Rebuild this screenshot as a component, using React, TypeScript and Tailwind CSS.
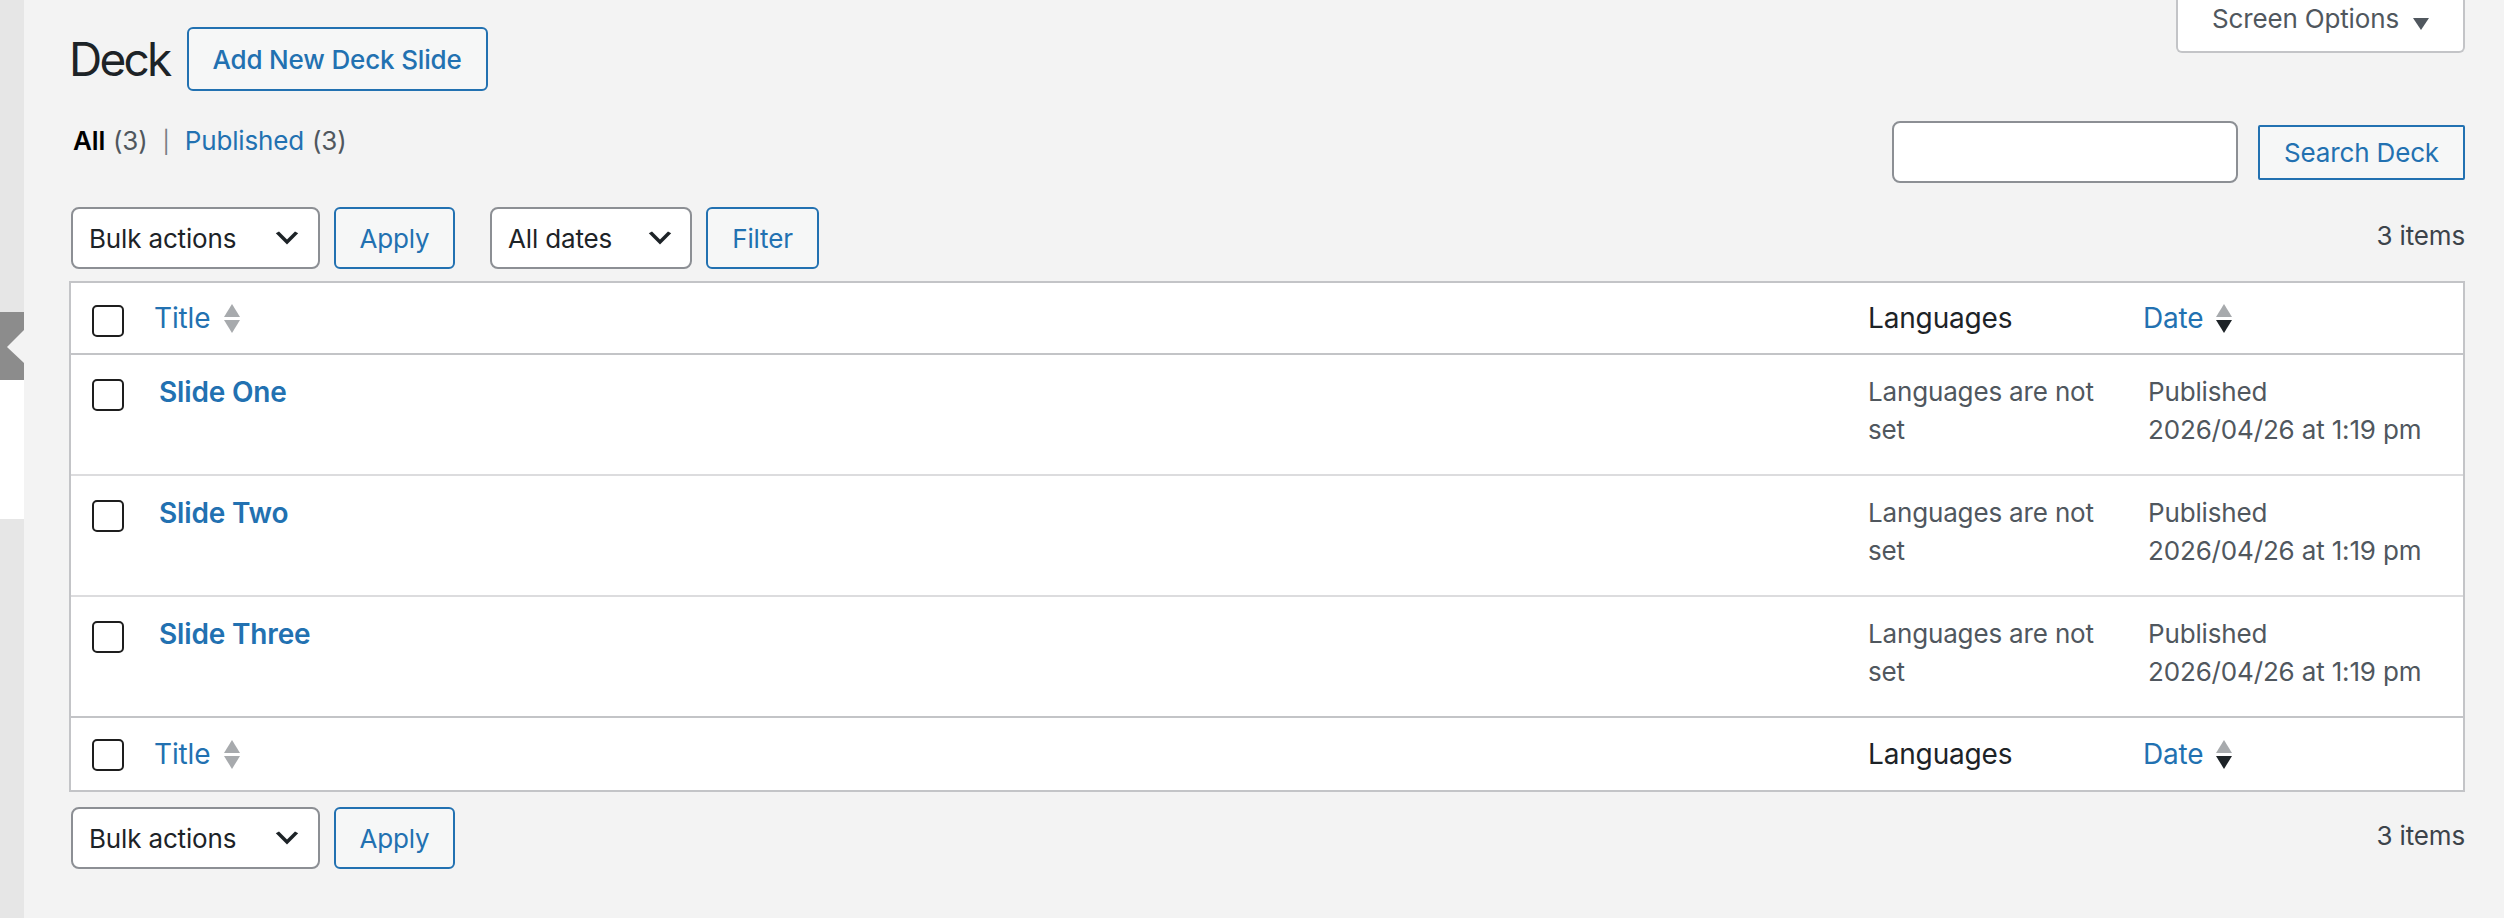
import React from "react";

const SLIDES = ["Slide One", "Slide Two", "Slide Three"];
const COLS = "grid grid-cols-[68px_1fr_280px_335px]";

function SortArrows({ desc }: { desc?: boolean }) {
  return (
    <svg width="16" height="30" viewBox="0 0 16 30" className="shrink-0">
      <polygon points="8,1 16,14 0,14" fill="#a7aaad" />
      <polygon points="0,17 16,17 8,30" fill={desc ? "#1d2327" : "#a7aaad"} />
    </svg>
  );
}

function Chevron() {
  return (
    <svg width="32" height="32" viewBox="0 0 20 20" className="shrink-0">
      <path d="M5 6l5 5 5-5 2 1-7 7-7-7 2-1z" fill="#1d2327" />
    </svg>
  );
}

function Checkbox() {
  return <span className="block h-[32px] w-[32px] rounded-[5px] border-2 border-[#1e1e1e] bg-white" />;
}

function Select({ label, className }: { label: string; className: string }) {
  return (
    <div
      className={`flex h-[62px] items-center justify-between rounded-[8px] border-2 border-[#8c8f94] bg-white pl-[16px] text-[26px] text-[#1d2327] ${className}`}
    >
      <span>{label}</span>
      <Chevron />
    </div>
  );
}

function Button({ children, className }: { children: React.ReactNode; className: string }) {
  return (
    <button
      className={`flex items-center justify-center border-2 border-[#2271b1] bg-[#f6f7f7] text-[26px] text-[#2271b1] ${className}`}
    >
      {children}
    </button>
  );
}

function Tablenav({ withFilter }: { withFilter?: boolean }) {
  return (
    <div className="flex h-[62px] items-center justify-between">
      <div className="ml-[2px] flex items-center">
        <Select label="Bulk actions" className="w-[249px] pr-[15px]" />
        <Button className="ml-[14px] h-[62px] w-[121px] rounded-[6px]">Apply</Button>
        {withFilter && (
          <>
            <Select label="All dates" className="ml-[35px] w-[202px] pr-[14px]" />
            <Button className="ml-[14px] h-[62px] w-[113px] rounded-[6px]">Filter</Button>
          </>
        )}
      </div>
      <span className="mb-[5px] text-[26px] text-[#3c434a]">3 items</span>
    </div>
  );
}

function HeadRow({ footer }: { footer?: boolean }) {
  return (
    <div className={`${COLS} h-[72px] items-center ${footer ? "" : "border-b-2 border-[#c3c4c7]"}`}>
      <div className={`pl-[21px] ${footer ? "pt-[2px]" : "pt-[6px]"}`}>
        <Checkbox />
      </div>
      <div className="flex items-center gap-[14px] pl-[15px]">
        <span className="text-[28px] text-[#2271b1]">Title</span>
        <SortArrows />
      </div>
      <div className="pl-[20px] text-[28px] text-[#1d2327]">Languages</div>
      <div className="flex items-center gap-[12px] pl-[15px]">
        <span className="text-[28px] text-[#2271b1]">Date</span>
        <SortArrows desc />
      </div>
    </div>
  );
}

export default function App() {
  return (
    <div className="flex h-screen w-full overflow-hidden bg-[#f3f3f3] font-[Inter,sans-serif] tracking-[-0.01em]">
      {/* collapsed admin menu edge */}
      <aside className="flex w-[24px] shrink-0 flex-col">
        <div className="h-[312px] bg-[#e6e6e6]" />
        <div className="relative h-[68px] bg-[#8c8c8c]">
          <svg width="24" height="68" viewBox="0 0 24 68" className="absolute left-0 top-0">
            <polygon points="24,18 7,35 24,51" fill="#f3f3f3" />
          </svg>
        </div>
        <div className="h-[139px] bg-white" />
        <div className="flex-1 bg-[#e6e6e6]" />
      </aside>

      <main className="flex-1 pl-[45px] pr-[39px]">
        <div className="flex items-start justify-between">
          <div className="flex items-center pt-[27px]">
            <h1 className="mr-[17px] text-[46px] leading-[64px] tracking-[-0.06em] text-[#1d2327]">Deck</h1>
            <Button className="h-[64px] w-[301px] rounded-[6px] font-medium">Add New Deck Slide</Button>
          </div>
          <div className="flex h-[53px] w-[289px] items-start justify-center gap-[14px] rounded-b-[6px] border-2 border-t-0 border-[#c3c4c7] bg-white pt-[2px]">
            <span className="text-[26px] leading-[34px] text-[#50575e]">Screen Options</span>
            <svg width="16" height="12" viewBox="0 0 16 12" className="mt-[16px]">
              <polygon points="0,0 16,0 8,12" fill="#50575e" />
            </svg>
          </div>
        </div>

        <div className="mt-[30px] flex items-start justify-between">
          <div className="ml-[4px] flex items-baseline text-[26px] leading-[39px]">
            <span className="font-semibold text-black">All</span>
            <span className="ml-[8px] text-[#50575e]">(3)</span>
            <span className="mx-[15px] text-[22px] text-[#787c82]">|</span>
            <span className="text-[#2271b1]">Published</span>
            <span className="ml-[8px] text-[#50575e]">(3)</span>
          </div>
          <div className="flex items-center gap-[20px]">
            <input className="h-[62px] w-[346px] rounded-[8px] border-2 border-[#8c8f94] bg-white" />
            <Button className="h-[55px] w-[207px] rounded-[2px]">Search Deck</Button>
          </div>
        </div>

        <div className="mt-[24px]">
          <Tablenav withFilter />
        </div>

        <div className="mt-[12px] border-2 border-[#c3c4c7] bg-white">
          <HeadRow />
          {SLIDES.map((title, i) => (
            <div
              key={title}
              className={`${COLS} h-[121px] border-b-2 ${i === SLIDES.length - 1 ? "border-[#c3c4c7]" : "border-[#dcdcde]"}`}
            >
              <div className="pl-[21px] pt-[24px]">
                <Checkbox />
              </div>
              <div className="pl-[20px] pt-[16px] text-[28px] font-semibold leading-[42px] text-[#2271b1]">{title}</div>
              <div className="px-[20px] pt-[18px] text-[26px] leading-[38px] text-[#50575e]">Languages are not set</div>
              <div className="pl-[20px] pt-[18px] text-[26px] leading-[38px] text-[#50575e]">
                Published
                <br />
                2026/04/26 at 1:19 pm
              </div>
            </div>
          ))}
          <HeadRow footer />
        </div>

        <div className="mt-[15px]">
          <Tablenav />
        </div>
      </main>
    </div>
  );
}
